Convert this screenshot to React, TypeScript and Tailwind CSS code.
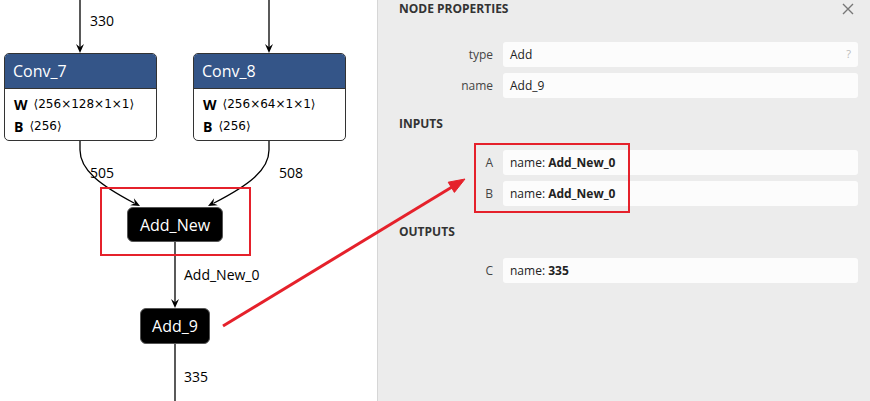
import * as React from 'react';

const font = { fontFamily: '"Open Sans", "Noto Sans", "DejaVu Sans", sans-serif' };

// notched arrow head pointing along (dx, dy), tip at (x, y)
const head = (x: number, y: number, dx: number, dy: number, len = 9, half = 4) => {
  const m = Math.hypot(dx, dy);
  const ux = dx / m;
  const uy = dy / m;
  const nx = -uy;
  const ny = ux;
  const bx = x - ux * len;
  const by = y - uy * len;
  const cx = x - ux * len * 0.65;
  const cy = y - uy * len * 0.65;
  return `M${x} ${y} L${bx + nx * half} ${by + ny * half} L${cx} ${cy} L${bx - nx * half} ${by - ny * half} Z`;
};

type ConvProps = { name: string; w: string; left: string };
const ConvNode = ({ name, w, left }: ConvProps) => (
  <div
    className={`absolute top-[53px] w-[153px] h-[88px] rounded-[5px] border border-[#333] bg-white overflow-hidden ${left}`}
  >
    <div className="h-[35px] bg-[#345588] border-b border-[#333] text-white text-[16px] px-[8px] flex items-center">
      {name}
    </div>
    <div className="pt-[4px] px-[9px] text-[14px] text-black">
      <div className="h-[22px] flex items-center gap-[6px]">
        <span className="font-bold">W</span>
        <span style={{ fontFamily: '"DejaVu Sans", sans-serif' }} className="text-[12px]">
          ⟨{w}⟩
        </span>
      </div>
      <div className="h-[22px] flex items-center gap-[6px]">
        <span className="font-bold">B</span>
        <span style={{ fontFamily: '"DejaVu Sans", sans-serif' }} className="text-[12px]">
          ⟨256⟩
        </span>
      </div>
    </div>
  </div>
);

const OpNode = ({ name, cls }: { name: string; cls: string }) => (
  <div
    className={`absolute rounded-[6px] bg-black border border-[#555] text-white text-[16px] flex items-center justify-center ${cls}`}
  >
    {name}
  </div>
);

const EdgeLabel = ({ text, cls }: { text: string; cls: string }) => (
  <div className={`absolute text-[14px] leading-[20px] text-black ${cls}`}>{text}</div>
);

const Row = ({ label, children }: { label: string; children: React.ReactNode }) => (
  <div className="flex items-center h-[25px]">
    <div className="w-[115px] text-right text-[12px] text-[#444]">{label}</div>
    <div className="ml-[10px] w-[355px] h-[25px] bg-[#fcfcfc] rounded-[3px] flex items-center px-[7px] text-[12px] text-[#222]">
      {children}
    </div>
  </div>
);

const Heading = ({ text, cls = '' }: { text: string; cls?: string }) => (
  <div className={`h-[14px] pl-[21px] text-[12px] leading-[14px] font-bold text-[#333] ${cls}`}>{text}</div>
);

export default function App() {
  return (
    <div className="relative w-[870px] h-[401px] flex overflow-hidden bg-white" style={font}>
      {/* graph canvas */}
      <div className="relative w-[377px] h-[401px] bg-white">
        <svg className="absolute inset-0" width="377" height="401">
          <g stroke="#000" strokeWidth="1.3" fill="none">
            <path d="M80 0 L80 47" />
            <path d="M269 0 L269 47" />
            <path d="M80 141 L80 150 C80 170, 100 185, 134 203" />
            <path d="M269 141 L269 150 C269 170, 249 185, 214 203" />
            <path d="M175 242 L175 302" />
            <path d="M175 344 L175 401" />
          </g>
          <g fill="#000">
            <path d={head(80, 53, 0, 1)} />
            <path d={head(269, 53, 0, 1)} />
            <path d={head(140, 206, 40, 21)} />
            <path d={head(208, 206, -40, 21)} />
            <path d={head(175, 308, 0, 1)} />
          </g>
        </svg>
        <EdgeLabel text="330" cls="left-[90px] top-[11px]" />
        <ConvNode name="Conv_7" w="256×128×1×1" left="left-[4px]" />
        <ConvNode name="Conv_8" w="256×64×1×1" left="left-[193px]" />
        <EdgeLabel text="505" cls="left-[90px] top-[163px]" />
        <EdgeLabel text="508" cls="left-[279px] top-[163px]" />
        <OpNode name="Add_New" cls="left-[127px] top-[207px] w-[96px] h-[35px]" />
        <EdgeLabel text="Add_New_0" cls="left-[184px] top-[265px]" />
        <OpNode name="Add_9" cls="left-[140px] top-[308px] w-[70px] h-[36px]" />
        <EdgeLabel text="335" cls="left-[184px] top-[367px]" />
      </div>

      {/* properties sidebar */}
      <div className="w-[493px] h-[401px] bg-[#ececec] border-l border-[#d6d6d6] flex flex-col">
        <div className="h-[16px] pt-[2px] pl-[21px] pr-[16px] flex items-center justify-between">
          <span className="text-[12px] leading-[14px] font-bold text-[#333]">NODE PROPERTIES</span>
          <svg width="12" height="12" viewBox="0 0 12 12">
            <path d="M1 1 L11 11 M11 1 L1 11" stroke="#777" strokeWidth="1.4" />
          </svg>
        </div>
        <div className="mt-[26px] flex flex-col gap-[6px]">
          <Row label="type">
            <span className="flex-1">Add</span>
            <span className="text-[#bbb] text-[11px]">?</span>
          </Row>
          <Row label="name">Add_9</Row>
        </div>
        <Heading text="INPUTS" cls="mt-[19px]" />
        <div className="mt-[19px] flex flex-col gap-[6px]">
          <Row label="A">
            name:&nbsp;<b>Add_New_0</b>
          </Row>
          <Row label="B">
            name:&nbsp;<b>Add_New_0</b>
          </Row>
        </div>
        <Heading text="OUTPUTS" cls="mt-[19px]" />
        <div className="mt-[19px] flex flex-col gap-[6px]">
          <Row label="C">
            name:&nbsp;<b>335</b>
          </Row>
        </div>
      </div>

      {/* annotations */}
      <div className="absolute left-[100px] top-[187px] w-[151px] h-[69px] border-2 border-[#e5212b]" />
      <div className="absolute left-[474px] top-[143px] w-[156px] h-[70px] border-2 border-[#e5212b]" />
      <svg className="absolute inset-0 pointer-events-none" width="870" height="401">
        <path d="M223 326 L452 187" stroke="#e5212b" strokeWidth="3" fill="none" />
        <path d="M465 179 L454.4 192.4 L448.2 182.2 Z" fill="#e5212b" stroke="#e5212b" strokeWidth="1" />
      </svg>
    </div>
  );
}
